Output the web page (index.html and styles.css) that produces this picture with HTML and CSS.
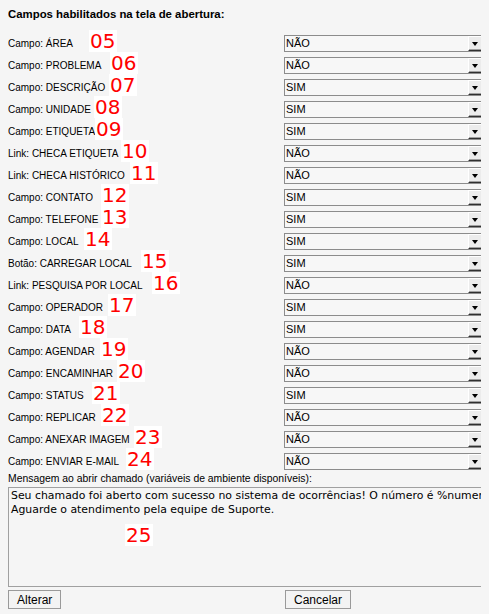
FILE: index.html
```html
<!DOCTYPE html>
<html lang="pt-BR">
<head>
<meta charset="utf-8">
<title>Campos habilitados</title>
<link rel="stylesheet" href="styles.css">
</head>
<body>
<h1 class="title">Campos habilitados na tela de abertura:</h1>
<div class="fields">
  <div class="row"><span class="label">Campo: ÁREA</span><div class="select"><span class="val">NÃO</span><i class="arrow"></i></div><span class="tag t05">05</span></div>
  <div class="row"><span class="label">Campo: PROBLEMA</span><div class="select"><span class="val">NÃO</span><i class="arrow"></i></div><span class="tag t06">06</span></div>
  <div class="row"><span class="label">Campo: DESCRIÇÃO</span><div class="select"><span class="val">SIM</span><i class="arrow"></i></div><span class="tag t07">07</span></div>
  <div class="row"><span class="label">Campo: UNIDADE</span><div class="select"><span class="val">SIM</span><i class="arrow"></i></div><span class="tag t08">08</span></div>
  <div class="row"><span class="label">Campo: ETIQUETA</span><div class="select"><span class="val">SIM</span><i class="arrow"></i></div><span class="tag t09">09</span></div>
  <div class="row"><span class="label">Link: CHECA ETIQUETA</span><div class="select"><span class="val">NÃO</span><i class="arrow"></i></div><span class="tag t10">10</span></div>
  <div class="row"><span class="label">Link: CHECA HISTÓRICO</span><div class="select"><span class="val">NÃO</span><i class="arrow"></i></div><span class="tag t11">11</span></div>
  <div class="row"><span class="label">Campo: CONTATO</span><div class="select"><span class="val">SIM</span><i class="arrow"></i></div><span class="tag t12">12</span></div>
  <div class="row"><span class="label">Campo: TELEFONE</span><div class="select"><span class="val">SIM</span><i class="arrow"></i></div><span class="tag t13">13</span></div>
  <div class="row"><span class="label">Campo: LOCAL</span><div class="select"><span class="val">SIM</span><i class="arrow"></i></div><span class="tag t14">14</span></div>
  <div class="row"><span class="label">Botão: CARREGAR LOCAL</span><div class="select"><span class="val">SIM</span><i class="arrow"></i></div><span class="tag t15">15</span></div>
  <div class="row"><span class="label">Link: PESQUISA POR LOCAL</span><div class="select"><span class="val">NÃO</span><i class="arrow"></i></div><span class="tag t16">16</span></div>
  <div class="row"><span class="label">Campo: OPERADOR</span><div class="select"><span class="val">SIM</span><i class="arrow"></i></div><span class="tag t17">17</span></div>
  <div class="row"><span class="label">Campo: DATA</span><div class="select"><span class="val">SIM</span><i class="arrow"></i></div><span class="tag t18">18</span></div>
  <div class="row"><span class="label">Campo: AGENDAR</span><div class="select"><span class="val">NÃO</span><i class="arrow"></i></div><span class="tag t19">19</span></div>
  <div class="row"><span class="label">Campo: ENCAMINHAR</span><div class="select"><span class="val">NÃO</span><i class="arrow"></i></div><span class="tag t20">20</span></div>
  <div class="row"><span class="label">Campo: STATUS</span><div class="select"><span class="val">SIM</span><i class="arrow"></i></div><span class="tag t21">21</span></div>
  <div class="row"><span class="label">Campo: REPLICAR</span><div class="select"><span class="val">NÃO</span><i class="arrow"></i></div><span class="tag t22">22</span></div>
  <div class="row"><span class="label">Campo: ANEXAR IMAGEM</span><div class="select"><span class="val">NÃO</span><i class="arrow"></i></div><span class="tag t23">23</span></div>
  <div class="row"><span class="label">Campo: ENVIAR E-MAIL</span><div class="select"><span class="val">NÃO</span><i class="arrow"></i></div><span class="tag t24">24</span></div>
</div>
<div class="msg-label">Mensagem ao abrir chamado (variáveis de ambiente disponíveis):</div>
<div class="msg-wrap">
  <textarea class="msg">Seu chamado foi aberto com sucesso no sistema de ocorrências! O número é %numero%.
Aguarde o atendimento pela equipe de Suporte.</textarea>
  <span class="tag t25">25</span>
</div>
<div class="actions">
  <div><button class="btn" type="button">Alterar</button></div>
  <div><button class="btn" type="button">Cancelar</button></div>
</div>
</body>
</html>
```

FILE: styles.css
```css
html {
  overflow: hidden;
  background: #f5f5f5;
}
body {
  margin: 8px;
  font-family: "Liberation Sans", Arial, sans-serif;
  font-size: 10.4px;
  color: #000;
}
.title {
  margin: 0;
  font-size: 11.4px;
  font-weight: bold;
  line-height: 13px;
}
.fields {
  margin-top: 11px;
}
.row {
  position: relative;
  display: grid;
  grid-template-columns: 276px 200px;
  height: 22px;
  align-items: center;
}
.label {
  white-space: nowrap;
  font-size: 10px;
}
.select {
  display: flex;
  height: 17px;
  box-sizing: border-box;
  border: 1px solid #8c8c8c;
  background: #f7f7f7;
  align-items: center;
}
.val {
  flex: 1;
  padding-left: 1px;
  font-size: 11px;
  line-height: 15px;
}
.arrow {
  position: relative;
  width: 15px;
  height: 15px;
  box-sizing: border-box;
  border-top: 1px solid #fff;
  border-left: 1px solid #fff;
  border-right: 1px solid #303030;
  border-bottom: 1px solid #303030;
  box-shadow: inset -1px -1px 0 #a0a0a0;
  background: #ececec;
}
.arrow::after {
  content: "";
  position: absolute;
  left: 3px;
  top: 5px;
  border-left: 3.5px solid transparent;
  border-right: 3.5px solid transparent;
  border-top: 4px solid #000;
}
.tag {
  position: absolute;
  top: -2px;
  background: #fff;
  color: #f00;
  font-family: "DejaVu Sans", sans-serif;
  font-size: 20px;
  line-height: 20px;
  padding: 1px 2px 1px 1px;
}
.t05 { left: 81px; }
.t06 { left: 102px; }
.t07 { left: 101px; }
.t08 { left: 86px; }
.t09 { left: 87px; }
.t10 { left: 113px; }
.t11 { left: 122px; }
.t12 { left: 93px; }
.t13 { left: 93px; }
.t14 { left: 76px; }
.t15 { left: 133px; }
.t16 { left: 144px; }
.t17 { left: 100px; }
.t18 { left: 71px; }
.t19 { left: 92px; }
.t20 { left: 109px; }
.t21 { left: 84px; }
.t22 { left: 93px; }
.t23 { left: 126px; }
.t24 { left: 118px; }
.msg-label {
  line-height: 13px;
}
.msg-wrap {
  position: relative;
  margin-top: 2px;
  height: 100px;
}
.msg {
  display: block;
  width: 520px;
  height: 100px;
  box-sizing: border-box;
  margin: 0;
  border: 1px solid #a0a0a0;
  background: #f5f5f5;
  padding: 1px 2px;
  font-family: "DejaVu Sans", sans-serif;
  font-size: 10.9px;
  line-height: 14px;
  color: #000;
  resize: none;
  overflow: hidden;
  white-space: pre;
}
.msg-wrap .t25 {
  left: 117px;
  top: 37px;
}
.actions {
  display: grid;
  grid-template-columns: 277px 200px;
  margin-top: 3px;
}
.btn {
  height: 19px;
  padding: 0 8px;
  border: 1px solid #9a9a9a;
  background: #f3f3f3;
  font-family: "Liberation Sans", Arial, sans-serif;
  font-size: 12px;
  color: #000;
  border-radius: 0;
}
```
